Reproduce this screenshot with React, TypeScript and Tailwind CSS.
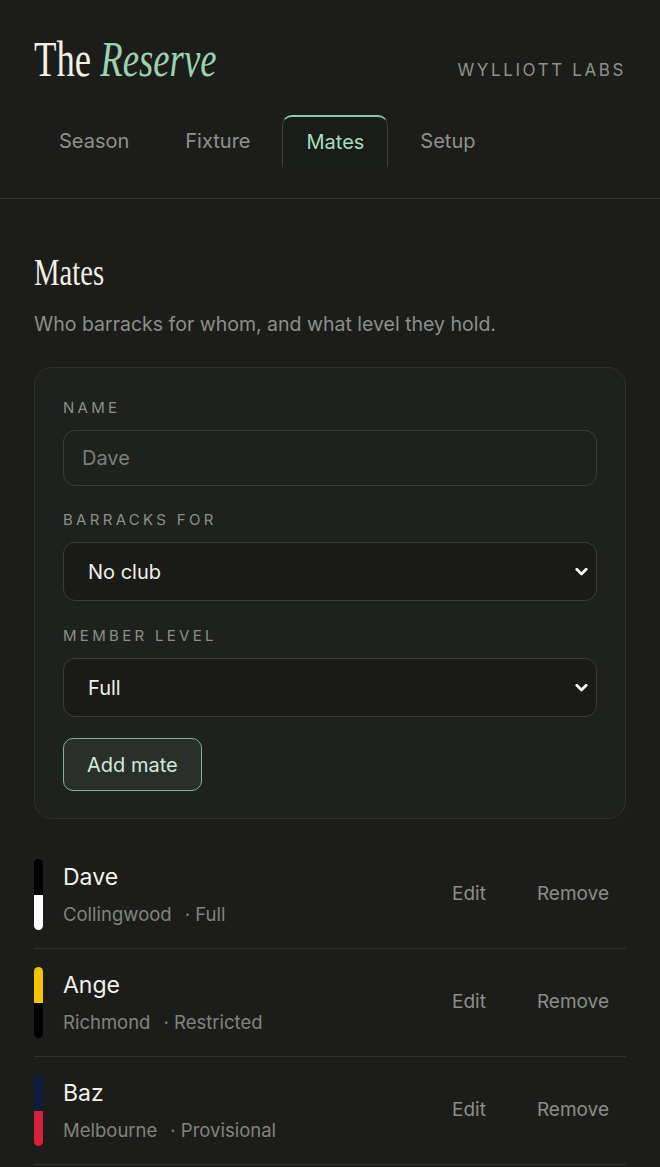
import React from "react";

const tabs = ["Season", "Fixture", "Mates", "Setup"];

const mates = [
  { name: "Dave", club: "Collingwood", level: "Full", top: "#000000", bottom: "#ffffff" },
  { name: "Ange", club: "Richmond", level: "Restricted", top: "#f5c400", bottom: "#000000" },
  { name: "Baz", club: "Melbourne", level: "Provisional", top: "#0d1b3d", bottom: "#d5213b" },
];

function Chevron() {
  return (
    <svg width="13" height="9" viewBox="0 0 13 9" className="absolute right-[8px] top-1/2 -translate-y-1/2">
      <path d="M1.8 1.8 L6.5 6.5 L11.2 1.8" fill="none" stroke="#f4f4ee" strokeWidth="2.8" strokeLinecap="round" strokeLinejoin="round" />
    </svg>
  );
}

function Select({ value }: { value: string }) {
  return (
    <div className="relative flex h-[59px] items-center rounded-[12px] border border-[#3a3d39] bg-[#1a1b19] pl-[24px] text-[20px] text-[#efefe9]">
      {value}
      <Chevron />
    </div>
  );
}

function Label({ children }: { children: React.ReactNode }) {
  return (
    <div className="mb-[12px] text-[15px] leading-[20px] tracking-[0.22em] text-[#8c8f89]">{children}</div>
  );
}

export default function App() {
  return (
    <div className="min-h-[1167px] bg-[#1c1d1b] font-['Inter',sans-serif] text-[#eeeee8]">
      <header className="border-b border-[#333532] px-[34px] pb-[31px] pt-[34px]">
        <div className="flex items-start justify-between">
          <div className="h-[51px] whitespace-nowrap font-['Liberation_Serif',serif] text-[51px] leading-[51px]">
            <span className="inline-block origin-left scale-x-[0.72]">
              <span className="text-[#f1efe6]">The </span>
              <span className="italic text-[#9bd2b2]">Reserve</span>
            </span>
          </div>
          <div className="mt-[24px] text-[17px] leading-[24px] tracking-[2.6px] text-[#8e918b]">WYLLIOTT LABS</div>
        </div>
        <nav className="mt-[30px] flex gap-2 pl-px">
          {tabs.map((t) =>
            t === "Mates" ? (
              <div
                key={t}
                className="flex h-[52px] items-center rounded-t-[10px] border border-b-0 border-[#3c423d] border-t-2 border-t-[#8fc7a6] bg-[#1a1c19] px-[23px] text-[20px] text-[#a9dcc0]"
              >
                {t}
              </div>
            ) : (
              <div key={t} className="flex h-[52px] items-center px-6 text-[20px] text-[#8e918b]">
                {t}
              </div>
            )
          )}
        </nav>
      </header>

      <main className="px-[34px]">
        <h1 className="mt-[54px] h-[38px] whitespace-nowrap font-['Liberation_Serif',serif] text-[38px] leading-[38px] text-[#f1efe6]">
          <span className="inline-block origin-left scale-x-[0.755]">Mates</span>
        </h1>
        <p className="mt-[19px] text-[19.5px] leading-[28px] text-[#8c8f89]">
          Who barracks for whom, and what level they hold.
        </p>

        <section className="mt-[29px] rounded-[18px] border border-[#2d302c] bg-[#1f211e] px-[28px] pb-[27px] pt-[30px]">
          <Label>NAME</Label>
          <div className="flex h-[56px] items-center rounded-[12px] border border-[#3a3d39] bg-[#1f211e] pl-[18px] text-[20px] text-[#7b7e79]">
            Dave
          </div>
          <div className="mt-[24px]">
            <Label>BARRACKS FOR</Label>
            <Select value="No club" />
          </div>
          <div className="mt-[25px]">
            <Label>MEMBER LEVEL</Label>
            <Select value="Full" />
          </div>
          <button className="mt-[21px] flex h-[53px] items-center rounded-[10px] border border-[#7ab594] bg-[#2a2f2b] px-[23px] text-[20px] text-[#d2e9db]">
            Add mate
          </button>
        </section>

        <ul className="mt-[22px]">
          {mates.map((m) => (
            <li key={m.name} className="flex items-center border-b border-[#2e302d] py-[18px]">
              <div className="flex h-[71px] w-[9px] flex-col overflow-hidden rounded-full">
                <div className="flex-1" style={{ backgroundColor: m.top }} />
                <div className="flex-1" style={{ backgroundColor: m.bottom }} />
              </div>
              <div className="ml-[20px] flex-1">
                <div className="text-[23px] leading-[28px] text-[#f2f1ea]">{m.name}</div>
                <div className="mt-[10px] text-[18.5px] leading-[26px] text-[#80837e]">
                  <span>{m.club}</span>
                  <span className="ml-[13px]">· {m.level}</span>
                </div>
              </div>
              <div className="flex gap-[19px] pr-px text-[19px] text-[#8b8d88]">
                <button className="px-4 py-2">Edit</button>
                <button className="px-4 py-2">Remove</button>
              </div>
            </li>
          ))}
        </ul>
      </main>
    </div>
  );
}
